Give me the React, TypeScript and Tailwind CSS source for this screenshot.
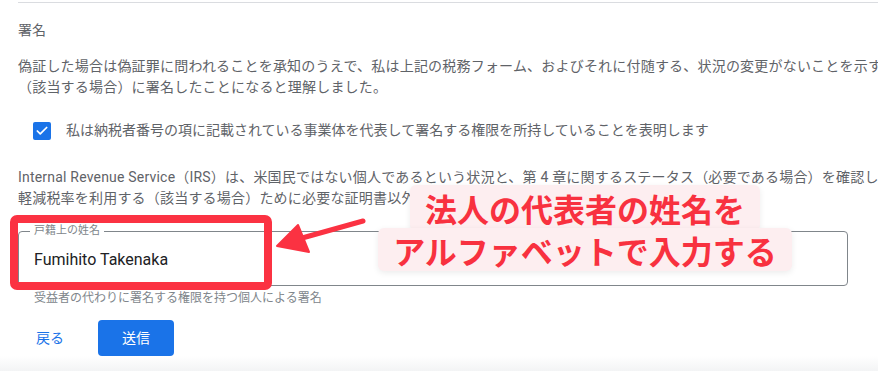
import { Check } from "lucide-react";

const font = "font-['Roboto','Noto_Sans_CJK_JP',sans-serif]";

function Callout() {
  return (
    <div className="absolute left-[378px] top-[185px] flex w-[414px] flex-col items-center font-['Noto_Sans_CJK_JP',sans-serif] text-[32px] font-bold text-[#f8313f]">
      <div className="flex h-[46px] items-center rounded-[6px] bg-[#fdeef0] px-[15px] leading-none shadow-[0_2px_6px_rgba(0,0,0,0.08)]">
        法人の代表者の姓名を
      </div>
      <div className="-mt-[3px] flex h-[43px] items-center rounded-[6px] bg-[#fdeef0] px-[15px] leading-none shadow-[0_2px_6px_rgba(0,0,0,0.08)]">
        アルファベットで入力する
      </div>
    </div>
  );
}

function Arrow() {
  return (
    <svg className="absolute left-[270px] top-[210px]" width="100" height="50" viewBox="0 0 100 50">
      <line x1="93" y1="11" x2="25" y2="30" stroke="#fb3242" strokeWidth="5" strokeLinecap="round" />
      <polygon points="7,36 28,15 39,42" fill="#fb3242" strokeLinejoin="round" stroke="#fb3242" strokeWidth="2" />
    </svg>
  );
}

export default function App() {
  return (
    <div className={`relative h-[371px] w-[878px] overflow-hidden bg-white text-[#5f6368] [text-spacing-trim:space-all] ${font}`}>
      <div className="pl-[18px]">
        <div className="mt-[2px] border-t border-[#dadce0]" />
        <h2 className="mt-[17px] text-[14px] leading-[21px]">署名</h2>
        <div className="mt-[15px] whitespace-nowrap text-[14px] leading-[21px] tracking-[0.2px]">
          <p>偽証した場合は偽証罪に問われることを承知のうえで、私は上記の税務フォーム、およびそれに付随する、状況の変更がないことを示す書類</p>
          <p>（該当する場合）に署名したことになると理解しました。</p>
        </div>
        <label className="mt-[22px] flex h-[21px] items-center gap-[15px] pl-[15px] text-[14px] leading-[21px]">
          <span className="flex h-[18px] w-[18px] items-center justify-center rounded-[2px] bg-[#1a73e8]">
            <Check className="h-[14px] w-[14px] text-white" strokeWidth={3} />
          </span>
          私は納税者番号の項に記載されている事業体を代表して署名する権限を所持していることを表明します
        </label>
        <div className="mt-[26px] whitespace-nowrap text-[14px] leading-[21px] tracking-[0.2px]">
          <p>Internal Revenue Service（IRS）は、米国民ではない個人であるという状況と、第 4 章に関するステータス（必要である場合）を確認し、</p>
          <p>軽減税率を利用する（該当する場合）ために必要な証明書以外の目的で、この情報を利用することはありません。</p>
        </div>
        <div className="relative mt-[22px] flex h-[55px] w-[830px] items-center rounded-[4px] border border-[#80868b] pl-[15px] pt-[3px]">
          <span className="absolute left-[11px] top-[-8px] bg-white px-[4px] text-[11px] leading-[14px] text-[#80868b]">
            戸籍上の姓名
          </span>
          <span className="text-[16px] text-[#202124]">Fumihito Takenaka</span>
        </div>
        <p className="mt-[4px] pl-[16px] text-[12px] leading-[16px] text-[#80868b]">
          受益者の代わりに署名する権限を持つ個人による署名
        </p>
        <div className="mt-[14px] flex items-center">
          <button className="ml-[18px] text-[14px] text-[#1a73e8]">戻る</button>
          <button className="ml-[34px] h-[36px] w-[76px] rounded-[4px] bg-[#1a73e8] text-[14px] text-white">
            送信
          </button>
        </div>
      </div>
      <div className="h-[15px] bg-gradient-to-b from-white to-[#f3f4f5]" />

      <div className="absolute left-[10px] top-[215px] h-[75px] w-[262px] rounded-[7px] border-[8px] border-[#fb3242]" />
      <Arrow />
      <Callout />
    </div>
  );
}
